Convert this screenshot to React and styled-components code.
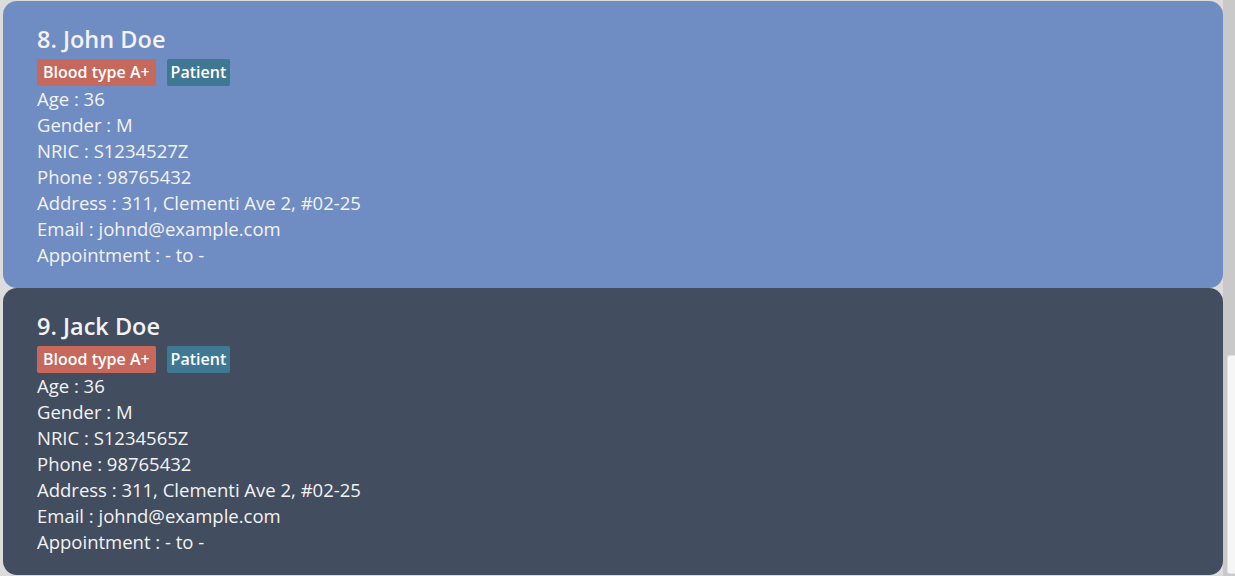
import React from "react";
import styled, { createGlobalStyle } from "styled-components";

const Global = createGlobalStyle`
  html, body { margin: 0; padding: 0; background: #dcdcdc; }
  body { font-family: "Open Sans", "Noto Sans", sans-serif; overflow: hidden; }
`;

const Frame = styled.div`
  display: flex;
  width: 1235px;
  height: 576px;
  overflow: hidden;
  background: #dcdcdc;
`;

const List = styled.div`
  flex: 1;
  display: flex;
  flex-direction: column;
  padding: 1px 0 0 3px;
`;

const Card = styled.div`
  background: ${(p) => p.$bg};
  border-radius: 14px;
  height: 287px;
  box-sizing: border-box;
  padding: 23px 34px 0;
  display: flex;
  flex-direction: column;
  color: #f3f3f3;
`;

const Title = styled.div`
  font-size: 23.5px;
  font-weight: 600;
  line-height: 30px;
  margin-bottom: 5px;
`;

const Tags = styled.div`
  display: flex;
  gap: 11px;
  margin-bottom: 0;
`;

const Tag = styled.span`
  background: ${(p) => p.$bg};
  color: #ffffff;
  font-size: 16px;
  font-weight: 600;
  height: 27px;
  line-height: 27px;
  padding: 0 ${(p) => p.$pad}px;
  border-radius: 2px;
`;

const Line = styled.div`
  font-size: 18.5px;
  font-weight: 400;
  line-height: 26px;
`;

const Track = styled.div`
  width: 12px;
  background: #c9c9c9;
  display: flex;
  flex-direction: column;
  align-items: flex-end;
`;

const Thumb = styled.div`
  margin-top: 355px;
  width: 7px;
  height: 217px;
  background: #f6f6f6;
  border: 1px solid #e2e2e2;
  border-right: none;
  border-radius: 3px 0 0 3px;
`;

const people = [
  { idx: 8, name: "John Doe", nric: "S1234527Z", bg: "#6f8cc3" },
  { idx: 9, name: "Jack Doe", nric: "S1234565Z", bg: "#424d5f" },
];

export default function App() {
  return (
    <>
      <Global />
      <Frame>
        <List>
          {people.map((p) => (
            <Card key={p.idx} $bg={p.bg}>
              <Title>
                {p.idx}. {p.name}
              </Title>
              <Tags>
                <Tag $bg="#c6685c" $pad={6}>Blood type A+</Tag>
                <Tag $bg="#3f7893" $pad={4}>Patient</Tag>
              </Tags>
              <Line>Age : 36</Line>
              <Line>Gender : M</Line>
              <Line>NRIC : {p.nric}</Line>
              <Line>Phone : 98765432</Line>
              <Line>Address : 311, Clementi Ave 2, #02-25</Line>
              <Line>Email : johnd@example.com</Line>
              <Line>Appointment : - to -</Line>
            </Card>
          ))}
        </List>
        <Track>
          <Thumb />
        </Track>
      </Frame>
    </>
  );
}
